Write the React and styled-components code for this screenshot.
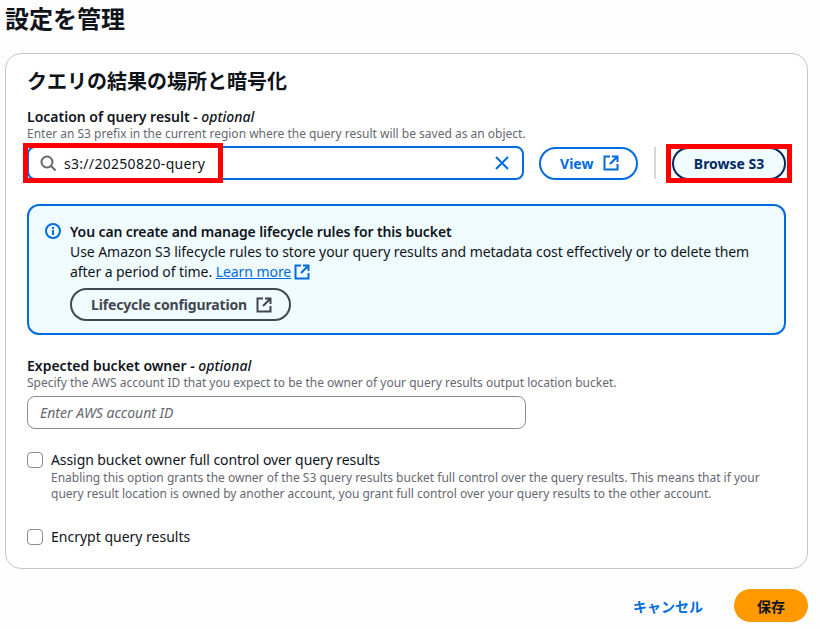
import React from "react";
import styled, { createGlobalStyle } from "styled-components";

const GlobalStyle = createGlobalStyle`
  html, body {
    margin: 0;
    padding: 0;
    background: #fdfdfe;
    color: #0f141a;
    font-family: "Noto Sans", "Noto Sans CJK JP", sans-serif;
  }
  * { box-sizing: border-box; }
`;

const ExternalIcon = ({ size = 16 }) => (
  <svg width={size} height={size} viewBox="0 0 16 16" fill="none" stroke="currentColor" strokeWidth="2">
    <path d="M7 1.5H1.5v13h13V9" />
    <path d="M9 1.5h5.5V7M14.5 1.5 7 9" />
  </svg>
);

const SearchIcon = () => (
  <svg width="16" height="16" viewBox="0 0 16 16" fill="none" stroke="#656871" strokeWidth="2">
    <circle cx="7" cy="7" r="5.5" />
    <path d="M11 11l4.5 4.5" />
  </svg>
);

const ClearIcon = () => (
  <svg width="16" height="16" viewBox="0 0 16 16" fill="none" stroke="#006ce0" strokeWidth="2">
    <path d="M2 2l12 12M14 2 2 14" />
  </svg>
);

const InfoIcon = () => (
  <svg width="16" height="16" viewBox="0 0 16 16" fill="none" stroke="#006ce0" strokeWidth="2">
    <circle cx="8" cy="8" r="7" />
    <path d="M8 7v5M8 4v2" />
  </svg>
);

const Page = styled.div`
  width: 820px;
  height: 629px;
  padding: 2px 12px 0 5px;
  overflow: hidden;
`;

const Title = styled.h1`
  margin: 0 0 17px;
  font-size: 24px;
  line-height: 34px;
  font-weight: 700;
`;

const Card = styled.section`
  height: 516px;
  padding: 14px 21px 0 21px;
  background: #fff;
  border: 1px solid #c6c6cd;
  border-radius: 16px;
`;

const CardTitle = styled.h2`
  margin: 0 0 12px;
  font-size: 20px;
  line-height: 28px;
  font-weight: 700;
`;

const Label = styled.div`
  font-size: 14px;
  line-height: 18px;
  font-weight: 600;
  em { font-weight: 500; }
`;

const Hint = styled.div`
  font-size: 12px;
  line-height: 16px;
  color: #656871;
`;

const QueryRow = styled.div`
  display: flex;
  align-items: center;
  margin-top: 4px;
`;

const SearchBox = styled.div`
  position: relative;
  display: flex;
  align-items: center;
  gap: 8px;
  width: 498px;
  height: 34px;
  padding: 0 12px 0 11px;
  border: 2px solid #006ce0;
  border-radius: 8px;
  font-size: 14px;
`;

const QueryText = styled.span`
  flex: 1;
  letter-spacing: 0.3px;
`;

const Pill = styled.button`
  position: relative;
  display: inline-flex;
  align-items: center;
  justify-content: center;
  gap: ${(p) => p.$gap || 8}px;
  height: 33px;
  width: ${(p) => p.$width}px;
  padding: 0;
  font: 700 14px "Noto Sans", sans-serif;
  color: ${(p) => p.$color};
  background: ${(p) => p.$bg || "transparent"};
  border: 2px solid ${(p) => p.$color};
  border-radius: 20px;
`;

const ViewButton = styled(Pill)`
  margin-left: 15px;
  padding-left: 2px;
`;

const Divider = styled.div`
  width: 2px;
  height: 32px;
  margin: 0 16px;
  background: #d5d6db;
`;

const Marker = styled.div`
  position: absolute;
  border: 5px solid #ff0000;
  pointer-events: none;
  top: -5px;
  bottom: -5px;
  left: ${(p) => p.$left}px;
  right: ${(p) => p.$right}px;
`;

const Alert = styled.div`
  display: flex;
  gap: 8px;
  width: 759px;
  height: 131px;
  margin-top: 24px;
  padding: 16px 16px 0 16px;
  background: #f0fbff;
  border: 2px solid #006ce0;
  border-radius: 12px;
`;

const AlertIcon = styled.div`
  padding: 1px 1px 0 0;
  line-height: 0;
`;

const AlertBody = styled.div`
  font-size: 14px;
  line-height: 20px;
  letter-spacing: -0.06px;
`;

const AlertTitle = styled.div`
  font-weight: 600;
  letter-spacing: -0.12px;
`;

const DocLink = styled.a`
  color: #006ce0;
  text-decoration: underline;
  display: inline-flex;
  align-items: center;
  gap: 3px;
`;

const ConfigButton = styled(Pill)`
  margin-top: 6px;
  padding-left: 2px;
  letter-spacing: -0.15px;
`;

const OwnerBlock = styled.div`
  margin-top: 22px;
`;

const OwnerInput = styled.div`
  display: flex;
  align-items: center;
  width: 499px;
  height: 33px;
  margin-top: 5px;
  padding: 0 12px;
  border: 1px solid #8c8c94;
  border-radius: 8px;
  font-size: 14px;
  font-style: italic;
  color: #656871;
`;

const CheckRow = styled.div`
  display: flex;
  gap: 8px;
  margin-top: ${(p) => p.$top}px;
`;

const Box = styled.span`
  flex: none;
  width: 16px;
  height: 16px;
  margin-top: 2px;
  border: 1px solid #8c8c94;
  border-radius: 4px;
  background: #fff;
`;

const CheckText = styled.div`
  font-size: 14px;
  line-height: 20px;
`;

const CheckTitle = styled.div`
  letter-spacing: -0.08px;
`;

const Footer = styled.div`
  display: flex;
  justify-content: flex-end;
  align-items: center;
  gap: 31px;
  margin-top: 20px;
`;

const CancelLink = styled.span`
  font-size: 14px;
  font-weight: 700;
  color: #006ce0;
`;

const SaveButton = styled.button`
  width: 74px;
  height: 33px;
  border: 0;
  border-radius: 20px;
  background: #ff9900;
  color: #0f141a;
  font: 700 14px "Noto Sans", "Noto Sans CJK JP", sans-serif;
`;

export default function App() {
  return (
    <>
      <GlobalStyle />
      <Page>
        <Title>設定を管理</Title>
        <Card>
          <CardTitle>クエリの結果の場所と暗号化</CardTitle>
          <Label>Location of query result - <em>optional</em></Label>
          <Hint>Enter an S3 prefix in the current region where the query result will be saved as an object.</Hint>
          <QueryRow>
            <SearchBox>
              <SearchIcon />
              <QueryText>s3://20250820-query</QueryText>
              <ClearIcon />
              <Marker $left={-6} $right={299} />
            </SearchBox>
            <ViewButton $width={99} $gap={10} $color="#006ce0">View <ExternalIcon /></ViewButton>
            <Divider />
            <Pill $width={114} $color="#002a66" $bg="#f0fbff">
              Browse S3
              <Marker $left={-8} $right={-8} />
            </Pill>
          </QueryRow>
          <Alert>
            <AlertIcon><InfoIcon /></AlertIcon>
            <AlertBody>
              <AlertTitle>You can create and manage lifecycle rules for this bucket</AlertTitle>
              Use Amazon S3 lifecycle rules to store your query results and metadata cost effectively or to delete them
              <br />
              after a period of time. <DocLink>Learn more <ExternalIcon /></DocLink>
              <br />
              <ConfigButton $width={221} $gap={9} $color="#424650">Lifecycle configuration <ExternalIcon /></ConfigButton>
            </AlertBody>
          </Alert>
          <OwnerBlock>
            <Label>Expected bucket owner - <em>optional</em></Label>
            <Hint>Specify the AWS account ID that you expect to be the owner of your query results output location bucket.</Hint>
            <OwnerInput>Enter AWS account ID</OwnerInput>
          </OwnerBlock>
          <CheckRow $top={21}>
            <Box />
            <CheckText>
              <CheckTitle>Assign bucket owner full control over query results</CheckTitle>
              <Hint>
                Enabling this option grants the owner of the S3 query results bucket full control over the query results. This means that if your
                <br />
                query result location is owned by another account, you grant full control over your query results to the other account.
              </Hint>
            </CheckText>
          </CheckRow>
          <CheckRow $top={25}>
            <Box />
            <CheckText>Encrypt query results</CheckText>
          </CheckRow>
        </Card>
        <Footer>
          <CancelLink>キャンセル</CancelLink>
          <SaveButton>保存</SaveButton>
        </Footer>
      </Page>
    </>
  );
}
